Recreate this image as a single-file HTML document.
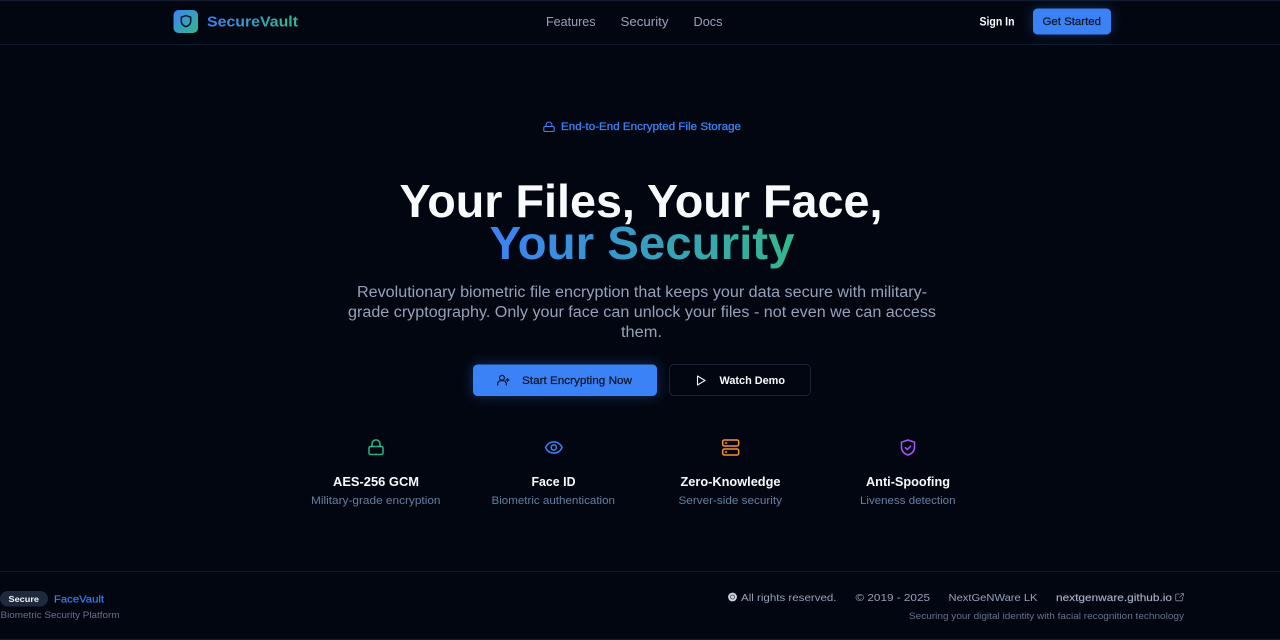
<!DOCTYPE html>
<html lang="en"><head><meta charset="utf-8"><title>SecureVault</title>
<style>
html,body{margin:0;padding:0;background:#020611;width:1280px;height:640px;overflow:hidden}
svg{display:block}
text{font-family:"Liberation Sans",Arial,sans-serif}
.b{font-weight:700}
</style></head><body>
<svg width="1280" height="640" viewBox="0 0 1280 640" xmlns="http://www.w3.org/2000/svg" fill="none">
<defs>
<linearGradient id="lg" gradientUnits="userSpaceOnUse" x1="173" y1="10" x2="198" y2="33"><stop offset="0" stop-color="#3b82f6"/><stop offset="1" stop-color="#34b88c"/></linearGradient>
<linearGradient id="tg" gradientUnits="userSpaceOnUse" x1="207" y1="0" x2="298" y2="0"><stop offset="0" stop-color="#3b82f6"/><stop offset="1" stop-color="#34b88c"/></linearGradient>
<linearGradient id="hg" gradientUnits="userSpaceOnUse" x1="490" y1="0" x2="795" y2="0"><stop offset="0" stop-color="#3b82f6"/><stop offset="1" stop-color="#34b88c"/></linearGradient>
<filter id="gl" x="-30%" y="-80%" width="160%" height="260%"><feGaussianBlur stdDeviation="6"/></filter>
</defs>
<rect width="1280" height="640" fill="#020611"/>
<!-- borders -->
<rect x="0" y="0" width="1280" height="1" fill="#131c2e"/>
<rect x="0" y="44" width="1280" height="1" fill="#131c2e"/>
<rect x="0" y="571" width="1280" height="1" fill="#131c2e"/>
<rect x="0" y="639" width="1280" height="1" fill="#131c2e"/>
<!-- nav -->
<rect x="173.5" y="10" width="24.5" height="23" rx="5" fill="url(#lg)"/>
<path d="M186 15.6l4.7 1.6v3.9c0 2.9-2.1 4.7-4.7 5.6-2.6-.9-4.7-2.7-4.7-5.6v-3.9z" stroke="#0f172a" stroke-width="1.5" stroke-linejoin="round"/>
<text class="b" x="207" y="26.5" font-size="15" fill="url(#tg)" textLength="91" lengthAdjust="spacingAndGlyphs">SecureVault</text>
<text x="546" y="26" font-size="12.5" fill="#94a3b8" textLength="49.5" lengthAdjust="spacingAndGlyphs">Features</text>
<text x="620.5" y="26" font-size="12.5" fill="#94a3b8" textLength="48" lengthAdjust="spacingAndGlyphs">Security</text>
<text x="693.5" y="26" font-size="12.5" fill="#94a3b8" textLength="29" lengthAdjust="spacingAndGlyphs">Docs</text>
<text class="b" x="979.5" y="25.5" font-size="11.5" fill="#f8fafc" textLength="35" lengthAdjust="spacingAndGlyphs">Sign In</text>
<rect x="1033" y="8.5" width="78" height="26" rx="4.5" fill="#3b82f6" opacity=".3" filter="url(#gl)"/>
<rect x="1033" y="8.5" width="78" height="26" rx="4.5" fill="#3b82f6"/>
<text x="1042.5" y="25.2" font-size="11" fill="#0f172a" textLength="58.5" lengthAdjust="spacingAndGlyphs" stroke="#0f172a" stroke-width=".25">Get Started</text>
<!-- badge -->
<g stroke="#3b82f6" stroke-width="1.1" stroke-linecap="round">
<rect x="543.8" y="126.5" width="10.4" height="5" rx="1.2"/>
<path d="M546.1 126.5v-1.6a2.9 2.9 0 0 1 5.8 0v1.6"/>
</g>
<text x="561" y="130.2" font-size="10.8" fill="#3b82f6" stroke="#3b82f6" stroke-width=".3" textLength="180" lengthAdjust="spacingAndGlyphs">End-to-End Encrypted File Storage</text>
<!-- hero -->
<text class="b" x="399.5" y="217" font-size="46" fill="#f8fafc" textLength="483" lengthAdjust="spacingAndGlyphs">Your Files, Your Face,</text>
<text class="b" x="489.5" y="259" font-size="46" fill="url(#hg)" textLength="305" lengthAdjust="spacingAndGlyphs">Your Security</text>
<text x="357" y="297" font-size="15.5" fill="#94a3b8" textLength="570" lengthAdjust="spacingAndGlyphs">Revolutionary biometric file encryption that keeps your data secure with military-</text>
<text x="348" y="317" font-size="15.5" fill="#94a3b8" textLength="588" lengthAdjust="spacingAndGlyphs">grade cryptography. Only your face can unlock your files - not even we can access</text>
<text x="621" y="337" font-size="15.5" fill="#94a3b8" textLength="41" lengthAdjust="spacingAndGlyphs">them.</text>
<!-- buttons -->
<rect x="473" y="364.5" width="184" height="31.5" rx="4.5" fill="#3b82f6" opacity=".35" filter="url(#gl)"/>
<rect x="473" y="364.5" width="184" height="31.5" rx="4.5" fill="#3b82f6"/>
<g stroke="#0f172a" stroke-width="1.2" stroke-linecap="round">
<circle cx="502" cy="377.8" r="2.4"/>
<path d="M497.7 385v-1.2a3 3 0 0 1 3-3h2.6a3 3 0 0 1 3 3v1.2M507.5 378.5v3M506 380h3"/>
</g>
<text x="522" y="384.2" font-size="11" fill="#0f172a" textLength="110" lengthAdjust="spacingAndGlyphs" stroke="#0f172a" stroke-width=".25">Start Encrypting Now</text>
<rect x="669.5" y="364.5" width="141" height="31" rx="4.5" fill="#020611" stroke="#1a2334"/>
<path d="M697.5 376l7.5 4.5-7.5 4.5z" stroke="#f1f5f9" stroke-width="1.1" stroke-linejoin="round"/>
<text class="b" x="719.5" y="384.2" font-size="11" fill="#f8fafc" textLength="65.5" lengthAdjust="spacingAndGlyphs">Watch Demo</text>
<!-- features -->
<g stroke="#34d399" stroke-width="1.5" stroke-linecap="round" stroke-opacity=".85">
<rect x="369" y="446.5" width="14" height="8" rx="1.5"/>
<path d="M372 446.5v-2.6a4 4 0 0 1 8 0v2.6"/>
</g>
<g stroke="#3b82f6" stroke-width="1.5">
<path d="M545.5 447.5c3.6-7.5 13-7.5 16.6 0-3.6 7.5-13 7.5-16.6 0z" stroke-linejoin="round"/>
<circle cx="553.8" cy="447.5" r="2.6"/>
</g>
<g stroke="#f59331" stroke-width="1.5" stroke-linecap="round">
<rect x="722.7" y="440" width="16" height="6" rx="1.6"/>
<rect x="722.7" y="449" width="16" height="6" rx="1.6"/>
<path d="M725.5 443h1M725.5 452h1"/>
</g>
<g stroke="#a855f7" stroke-width="1.5" stroke-linecap="round" stroke-linejoin="round">
<path d="M908 440l6.5 2.2v5.3c0 3.9-2.9 6.3-6.5 7.5-3.6-1.2-6.5-3.6-6.5-7.5v-5.3z"/>
<path d="M905.4 447.6l1.9 1.9 3.4-3.4"/>
</g>
<text class="b" x="333" y="486" font-size="12.5" fill="#f8fafc" textLength="86" lengthAdjust="spacingAndGlyphs">AES-256 GCM</text>
<text class="b" x="531.5" y="486" font-size="12.5" fill="#f8fafc" textLength="44" lengthAdjust="spacingAndGlyphs">Face ID</text>
<text class="b" x="680.5" y="486" font-size="12.5" fill="#f8fafc" textLength="100" lengthAdjust="spacingAndGlyphs">Zero-Knowledge</text>
<text class="b" x="866" y="486" font-size="12.5" fill="#f8fafc" textLength="84" lengthAdjust="spacingAndGlyphs">Anti-Spoofing</text>
<text x="311" y="504" font-size="11" fill="#64809f" textLength="129.5" lengthAdjust="spacingAndGlyphs">Military-grade encryption</text>
<text x="491.5" y="504" font-size="11" fill="#64809f" textLength="123.5" lengthAdjust="spacingAndGlyphs">Biometric authentication</text>
<text x="678.5" y="504" font-size="11" fill="#64809f" textLength="103.5" lengthAdjust="spacingAndGlyphs">Server-side security</text>
<text x="860" y="504" font-size="11" fill="#64809f" textLength="95.5" lengthAdjust="spacingAndGlyphs">Liveness detection</text>
<!-- footer left -->
<rect x="0" y="591" width="48" height="15.5" rx="7.7" fill="#1e293b"/>
<text class="b" x="8.5" y="601.8" font-size="8.5" fill="#f1f5f9" textLength="30.5" lengthAdjust="spacingAndGlyphs">Secure</text>
<text x="54" y="602.3" font-size="10.5" fill="#3b82f6" stroke="#3b82f6" stroke-width=".15" textLength="50" lengthAdjust="spacingAndGlyphs">FaceVault</text>
<text x="0.5" y="618" font-size="9.5" fill="#64748b" textLength="119" lengthAdjust="spacingAndGlyphs">Biometric Security Platform</text>
<!-- footer right -->
<circle cx="732.5" cy="597" r="4.4" fill="#cbd5e1"/>
<circle cx="732.5" cy="597" r="2" stroke="#020611" stroke-width=".8" stroke-opacity=".7"/>
<text x="741" y="601" font-size="10.5" fill="#94a3b8" textLength="95.5" lengthAdjust="spacingAndGlyphs">All rights reserved.</text>
<text x="855.5" y="601" font-size="10.5" fill="#94a3b8" textLength="74.5" lengthAdjust="spacingAndGlyphs">© 2019 - 2025</text>
<text x="948.5" y="601" font-size="10.5" fill="#94a3b8" textLength="89" lengthAdjust="spacingAndGlyphs">NextGeNWare LK</text>
<text x="1056" y="601" font-size="10.5" fill="#a3afc0" stroke="#a3afc0" stroke-width=".15" textLength="116" lengthAdjust="spacingAndGlyphs">nextgenware.github.io</text>
<path d="M1179.5 594h-2.8a1 1 0 0 0-1 1v4.8a1 1 0 0 0 1 1h4.8a1 1 0 0 0 1-1V597M1180.5 593.5h3v3M1183.5 593.5l-4 4" stroke="#7b899c" stroke-width=".8"/>
<text x="909" y="619" font-size="9.5" fill="#64748b" textLength="275" lengthAdjust="spacingAndGlyphs">Securing your digital identity with facial recognition technology</text>
</svg>
</body></html>
